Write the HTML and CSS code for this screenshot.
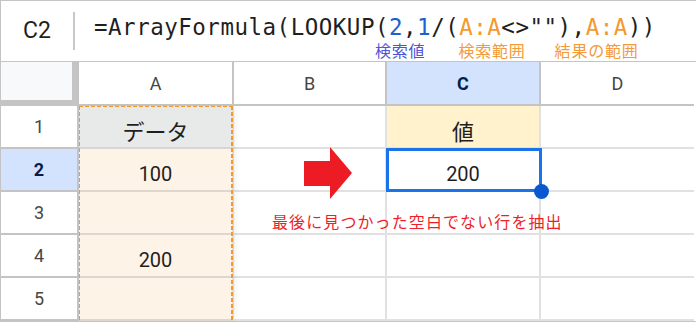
FILE: index.html
```html
<!DOCTYPE html>
<html lang="ja">
<head>
<meta charset="utf-8">
<link rel="stylesheet" href="styles.css">
</head>
<body>
<div class="sheet">
  <div class="fbar">
    <div class="namebox">C2</div>
    <div class="sep"></div>
    <div class="formula">
      <div class="fline">=ArrayFormula(LOOKUP(<span class="num">2</span>,<span class="num">1</span>/(<span class="rng">A:A</span>&lt;&gt;""),<span class="rng">A:A</span>))</div>
      <div class="labels"><span class="lab lab-key">検索値</span><span class="lab lab-rng">検索範囲</span><span class="lab lab-res">結果の範囲</span></div>
    </div>
  </div>
  <div class="grid">
    <div class="corner"></div>
    <div class="colhead">A</div>
    <div class="colhead">B</div>
    <div class="colhead colsel">C</div>
    <div class="colhead last">D</div>

    <div class="rowhead">1</div>
    <div class="cell a a1"><span class="jp">データ</span></div>
    <div class="cell"></div>
    <div class="cell c1"><span class="jp">値</span></div>
    <div class="cell last"></div>

    <div class="rowhead rowsel">2</div>
    <div class="cell a">100</div>
    <div class="cell"></div>
    <div class="cell">200</div>
    <div class="cell last"></div>

    <div class="rowhead">3</div>
    <div class="cell a"></div>
    <div class="cell"></div>
    <div class="cell"></div>
    <div class="cell last"></div>

    <div class="rowhead">4</div>
    <div class="cell a">200</div>
    <div class="cell"></div>
    <div class="cell"></div>
    <div class="cell last"></div>

    <div class="rowhead">5</div>
    <div class="cell a"></div>
    <div class="cell"></div>
    <div class="cell"></div>
    <div class="cell last"></div>

    <div class="range-a"></div>
    <div class="selbox"></div>
    <div class="handle"></div>
    <svg class="arrow" width="48" height="52" viewBox="0 0 48 52"><polygon points="0,14 26,14 26,0 48,26 26,52 26,39 0,39" fill="#ed1c24"/></svg>
    <div class="note">最後に見つかった空白でない行を抽出</div>
  </div>
</div>
</body>
</html>
```

FILE: styles.css
```css
html, body {
  margin: 0;
  padding: 0;
  background: #ffffff;
}
.sheet {
  width: 695px;
  border: 1px solid #c4c4c4;
  background: #ffffff;
  font-family: Roboto, "Noto Sans CJK JP", sans-serif;
  color: #1f1f1f;
}
.fbar {
  height: 60px;
  border-bottom: 1px solid #c4c4c4;
  display: flex;
  align-items: flex-start;
}
.namebox {
  width: 72px;
  height: 58px;
  display: flex;
  align-items: center;
  justify-content: center;
  font-size: 23px;
  color: #1f1f1f;
}
.sep {
  width: 2px;
  height: 38px;
  margin-top: 11px;
  background: #c8c8c8;
}
.formula {
  padding-left: 19px;
  padding-top: 14px;
}
.fline {
  font-family: "DejaVu Sans Mono", monospace;
  font-size: 22.5px;
  letter-spacing: 0.5px;
  line-height: 25px;
  color: #1f1f1f;
  white-space: pre;
}
.num { color: #1b5fd1; }
.rng { color: #f29a2e; }
.labels {
  display: flex;
  font-family: "Noto Sans CJK JP", sans-serif;
  font-size: 16px;
  letter-spacing: 0.8px;
  line-height: 17px;
  margin-top: 2px;
}
.lab-key { color: #4f55d6; margin-left: 281px; }
.lab-rng { color: #f39a3a; margin-left: 33px; }
.lab-res { color: #f39a3a; margin-left: 29px; }

.grid {
  position: relative;
  display: grid;
  grid-template-columns: 78px 155px 153px 154px 153px;
  grid-template-rows: 44px repeat(5, 43px);
}
.grid > div {
  box-sizing: border-box;
}
.corner {
  background: #f8f9fa;
  border-right: 7px solid #c4c4c4;
  border-bottom: 6px solid #c4c4c4;
}
.colhead {
  display: flex;
  align-items: center;
  justify-content: center;
  font-size: 18px;
  color: #444746;
  border-right: 2px solid #c4c4c4;
  border-bottom: 2px solid #c4c4c4;
}
.colhead.last { border-right: none; }
.colsel {
  background: #d3e3fd;
  color: #041e49;
  font-weight: 700;
}
.rowhead {
  display: flex;
  align-items: center;
  justify-content: center;
  font-size: 18px;
  color: #444746;
  border-right: 2px solid #c4c4c4;
  border-bottom: 2px solid #c4c4c4;
}
.rowsel {
  background: #d3e3fd;
  color: #041e49;
  font-weight: 700;
}
.cell {
  display: flex;
  align-items: center;
  justify-content: center;
  padding-top: 9px;
  font-size: 20px;
  color: #1f1f1f;
  border-right: 2px solid #e1e1e1;
  border-bottom: 2px solid #e1e1e1;
}
.cell.last { border-right: none; }
.cell.a {
  background: #fdf3e7;
  border-bottom-color: #ded7cd;
}
.cell.a1 {
  background: #e8eaea;
  border-bottom-color: #d6d6d6;
  padding-top: 7px;
}
.cell.c1 {
  background: #fff2cc;
  padding-top: 7px;
}
.jp {
  font-family: "Noto Sans CJK JP", sans-serif;
  font-size: 22px;
}
.range-a {
  position: absolute;
  left: 78px;
  top: 44px;
  width: 154px;
  bottom: 0;
  background:
    repeating-linear-gradient(to right, #f29a2e 0 4px, transparent 4px 6px) left top / 100% 1px no-repeat,
    repeating-linear-gradient(to bottom, #f29a2e 0 4px, transparent 4px 6px) left top / 1px 100% no-repeat,
    repeating-linear-gradient(to bottom, #f29a2e 0 4px, transparent 4px 6px) right top / 2px 100% no-repeat;
  box-shadow: 5px 0 6px -3px rgba(0, 0, 0, 0.08);
}
.selbox {
  position: absolute;
  left: 385px;
  top: 86px;
  width: 156px;
  height: 44px;
  box-sizing: border-box;
  border: 3px solid #1a73e8;
}
.handle {
  position: absolute;
  left: 533px;
  top: 122px;
  width: 15px;
  height: 15px;
  border-radius: 50%;
  background: #0b57d0;
}
.arrow {
  position: absolute;
  left: 303px;
  top: 85px;
}
.note {
  position: absolute;
  left: 271px;
  top: 149px;
  font-family: "Noto Sans CJK JP", sans-serif;
  font-size: 16px;
  letter-spacing: 1.1px;
  line-height: 20px;
  color: #ee1f2b;
  white-space: nowrap;
}
```
